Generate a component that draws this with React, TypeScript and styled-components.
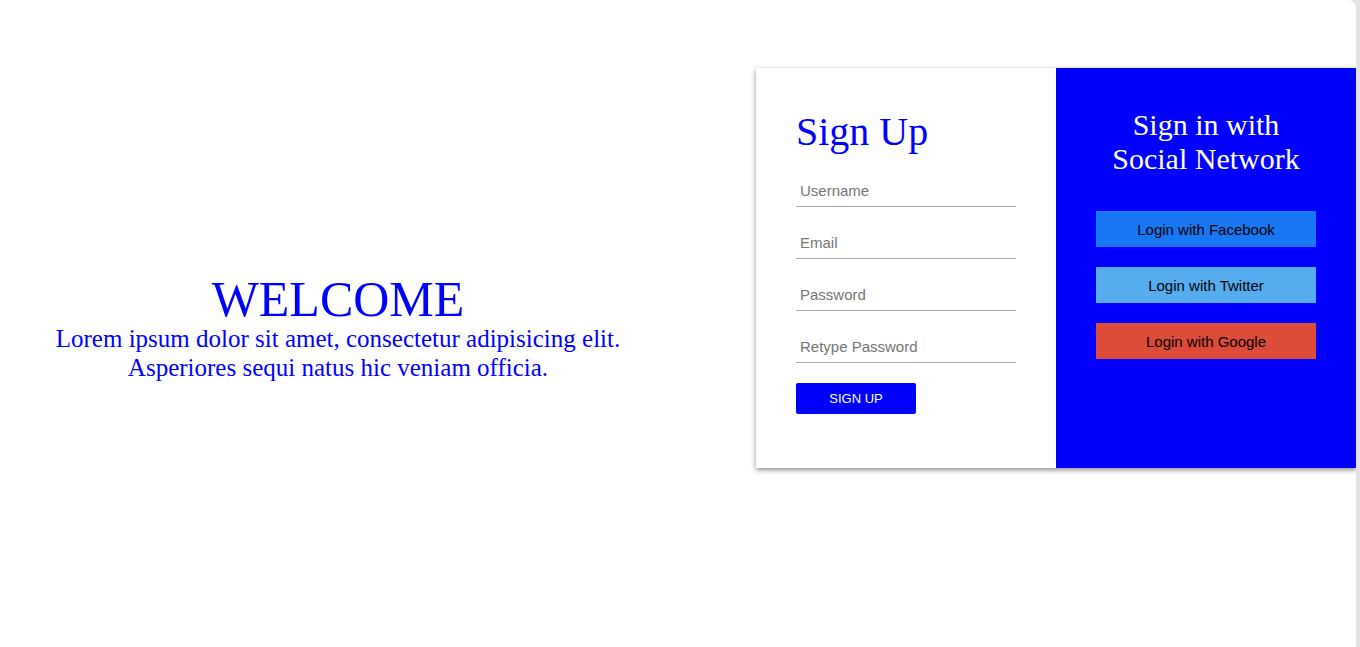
import React from "react";
import styled, { createGlobalStyle } from "styled-components";

const GlobalStyle = createGlobalStyle`
  html, body {
    margin: 0;
    padding: 0;
    background: #e3e3e6;
    overflow: hidden;
  }
  * { box-sizing: border-box; }
`;

const Page = styled.div`
  width: 1356px;
  height: 647px;
  background: #ffffff;
  border-top-right-radius: 8px;
  overflow: hidden;
  display: flex;
  align-items: flex-start;
  font-family: "Liberation Serif", "Times New Roman", serif;
`;

const Welcome = styled.section`
  width: 676px;
  height: 647px;
  display: flex;
  flex-direction: column;
  justify-content: center;
  align-items: center;
  text-align: center;
  color: #0000ff;
  padding-top: 8px;
`;

const WelcomeTitle = styled.h1`
  margin: 0;
  font-weight: normal;
  font-size: 50px;
  line-height: 50px;
`;

const WelcomeText = styled.p`
  margin: 0;
  font-size: 25px;
  line-height: 29px;
`;

const Card = styled.div`
  margin-top: 68px;
  margin-left: auto;
  width: 600px;
  height: 400px;
  display: flex;
  box-shadow: 0 2px 5px rgba(0, 0, 0, 0.45);
`;

const Panel = styled.div<{ $dark?: boolean }>`
  width: 300px;
  height: 100%;
  padding: ${(p) => (p.$dark ? "40px" : "41px 40px 40px")};
  display: flex;
  flex-direction: column;
  background: ${(p) => (p.$dark ? "#0000ff" : "#ffffff")};
  align-items: ${(p) => (p.$dark ? "center" : "stretch")};
`;

const Form = styled.form`
  display: flex;
  flex-direction: column;
  gap: 20px;
`;

const SignUpTitle = styled.h2`
  margin: 0;
  font-weight: normal;
  font-size: 40px;
  line-height: 46px;
  color: #0000ff;
`;

const Input = styled.input`
  width: 220px;
  height: 32px;
  border: none;
  border-bottom: 1px solid #a9a9a9;
  padding: 0 4px;
  font-family: "Liberation Sans", Arial, sans-serif;
  font-size: 15px;
  outline: none;
  background: transparent;
  &::placeholder {
    color: #757575;
  }
`;

const SubmitButton = styled.button`
  width: 120px;
  height: 31px;
  border: none;
  border-radius: 2px;
  background: #0000ff;
  color: #ffffff;
  font-family: "Liberation Sans", Arial, sans-serif;
  font-size: 13px;
  text-transform: uppercase;
  cursor: pointer;
`;

const SocialTitle = styled.h2`
  margin: 0 0 35px;
  font-weight: normal;
  font-size: 30px;
  line-height: 34px;
  color: #ffffff;
  text-align: center;
`;

const SocialList = styled.div`
  display: flex;
  flex-direction: column;
  gap: 20px;
`;

const SocialButton = styled.button<{ $bg: string }>`
  width: 220px;
  height: 36px;
  border: none;
  background: ${(p) => p.$bg};
  color: #000000;
  font-family: "Liberation Sans", Arial, sans-serif;
  font-size: 15px;
  cursor: pointer;
`;

export default function App() {
  return (
    <>
      <GlobalStyle />
      <Page>
        <Welcome>
          <WelcomeTitle>WELCOME</WelcomeTitle>
          <WelcomeText>
            Lorem ipsum dolor sit amet, consectetur adipisicing elit.
            <br />
            Asperiores sequi natus hic veniam officia.
          </WelcomeText>
        </Welcome>
        <Card>
          <Panel>
            <Form onSubmit={(e) => e.preventDefault()}>
              <SignUpTitle>Sign Up</SignUpTitle>
              <Input type="text" placeholder="Username" />
              <Input type="email" placeholder="Email" />
              <Input type="password" placeholder="Password" />
              <Input type="password" placeholder="Retype Password" />
              <SubmitButton type="submit">Sign Up</SubmitButton>
            </Form>
          </Panel>
          <Panel $dark>
            <SocialTitle>
              Sign in with
              <br />
              Social Network
            </SocialTitle>
            <SocialList>
              <SocialButton $bg="#1877f2">Login with Facebook</SocialButton>
              <SocialButton $bg="#55acee">Login with Twitter</SocialButton>
              <SocialButton $bg="#dd4b39">Login with Google</SocialButton>
            </SocialList>
          </Panel>
        </Card>
      </Page>
    </>
  );
}
